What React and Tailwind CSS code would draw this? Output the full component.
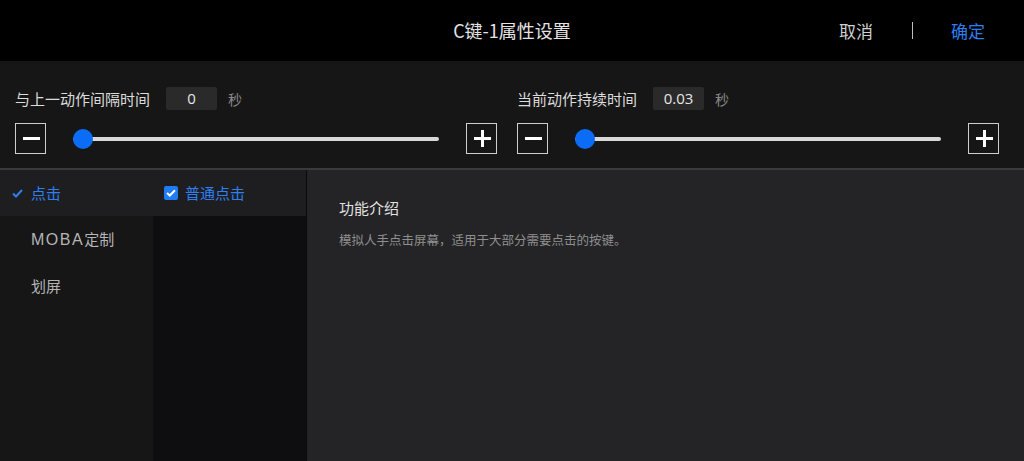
import React from "react";

const font = { fontFamily: '"Noto Sans CJK SC", "Noto Sans", sans-serif' };

function SquareBtn({ plus }) {
  return (
    <div className="relative w-[31px] h-[31px] border border-[#cfcfcf] shrink-0">
      <div className="absolute left-[7px] top-[13px] w-[17px] h-[3px] bg-white" />
      {plus && <div className="absolute left-[14px] top-[6px] w-[3px] h-[17px] bg-white" />}
    </div>
  );
}

function SliderBlock({ label, value }) {
  return (
    <div className="flex flex-col w-[482px]">
      <div className="flex items-center h-[23px]">
        <span className="text-[15px] text-[#dcdcdc] leading-none">{label}</span>
        <div className="ml-[16px] w-[51px] h-[23px] rounded-[2px] bg-[#2a2a2b] flex items-center justify-center text-[15px] text-[#e6e6e6] leading-none" style={{ fontFamily: '"Open Sans", "Noto Sans", sans-serif' }}>
          {value}
        </div>
        <span className="ml-[11px] text-[14px] text-[#8a8a8a] leading-none">秒</span>
      </div>
      <div className="flex items-center mt-[13px] h-[31px]">
        <SquareBtn />
        <div className="relative flex-1 mx-[27px] h-[4px] bg-[#d8d8d8] rounded-full">
          <div className="absolute left-0 top-[-8px] w-[20px] h-[20px] rounded-full bg-[#0b6cf7]" />
        </div>
        <SquareBtn plus />
      </div>
    </div>
  );
}

export default function App() {
  return (
    <div className="w-[1024px] h-[461px] bg-black flex flex-col overflow-hidden" style={font}>
      <div className="relative h-[61px] bg-black flex items-center justify-center shrink-0">
        <span className="text-[18px] text-[#e4e4e4]">C键-1属性设置</span>
        <div className="absolute right-[39px] top-0 h-full flex items-center">
          <span className="text-[17px] text-[#cfcfcf]">取消</span>
          <div className="ml-[39px] w-[1px] h-[17px] bg-[#bdbdbd]" />
          <span className="ml-[38px] text-[17px] text-[#2d7ff2]">确定</span>
        </div>
      </div>
      <div className="h-[109px] bg-[#161616] border-b-2 border-[#3a3a3b] flex pl-[15px] pt-[26px] gap-[20px] shrink-0">
        <SliderBlock label="与上一动作间隔时间" value="0" />
        <SliderBlock label="当前动作持续时间" value="0.03" />
      </div>
      <div className="flex flex-1">
        <div className="w-[153px] bg-[#161617] flex flex-col">
          <div className="h-[46px] bg-[#1e1e20] flex items-center pl-[12px]">
            <svg width="11" height="9" viewBox="0 0 11 9" className="mr-[8px]">
              <path d="M1 4.5 L4 7.5 L10 1" fill="none" stroke="#2d7ff2" strokeWidth="2" />
            </svg>
            <span className="text-[15px] text-[#2d7ff2]">点击</span>
          </div>
          <div className="h-[47px] flex items-center pl-[31px] text-[15px] text-[#b4b4b4]">
            <span className="text-[16px] tracking-[1.5px]" style={{ fontFamily: '"Liberation Sans", sans-serif' }}>MOBA</span>
            <span>定制</span>
          </div>
          <div className="h-[46px] flex items-center pl-[31px] text-[15px] text-[#b4b4b4]">划屏</div>
        </div>
        <div className="w-[153px] bg-[#0e0d10] flex flex-col">
          <div className="h-[46px] bg-[#1e1e20] flex items-center pl-[11px]">
            <div className="w-[14px] h-[14px] rounded-[2px] bg-[#1f7cf2] flex items-center justify-center mr-[7px]">
              <svg width="10" height="8" viewBox="0 0 10 8">
                <path d="M1 4 L3.8 6.5 L9 1.2" fill="none" stroke="white" strokeWidth="2" />
              </svg>
            </div>
            <span className="text-[15px] text-[#2d7ff2]">普通点击</span>
          </div>
        </div>
        <div className="w-[1px] bg-[#0a0a0a]" />
        <div className="flex-1 bg-[#242426] pl-[32px] pt-[27px]">
          <div className="text-[15px] text-[#e2e2e2] leading-[22px]">功能介绍</div>
          <div className="mt-[12px] text-[12.5px] text-[#8f8f8f] leading-[18px]">模拟人手点击屏幕，适用于大部分需要点击的按键。</div>
        </div>
      </div>
    </div>
  );
}
